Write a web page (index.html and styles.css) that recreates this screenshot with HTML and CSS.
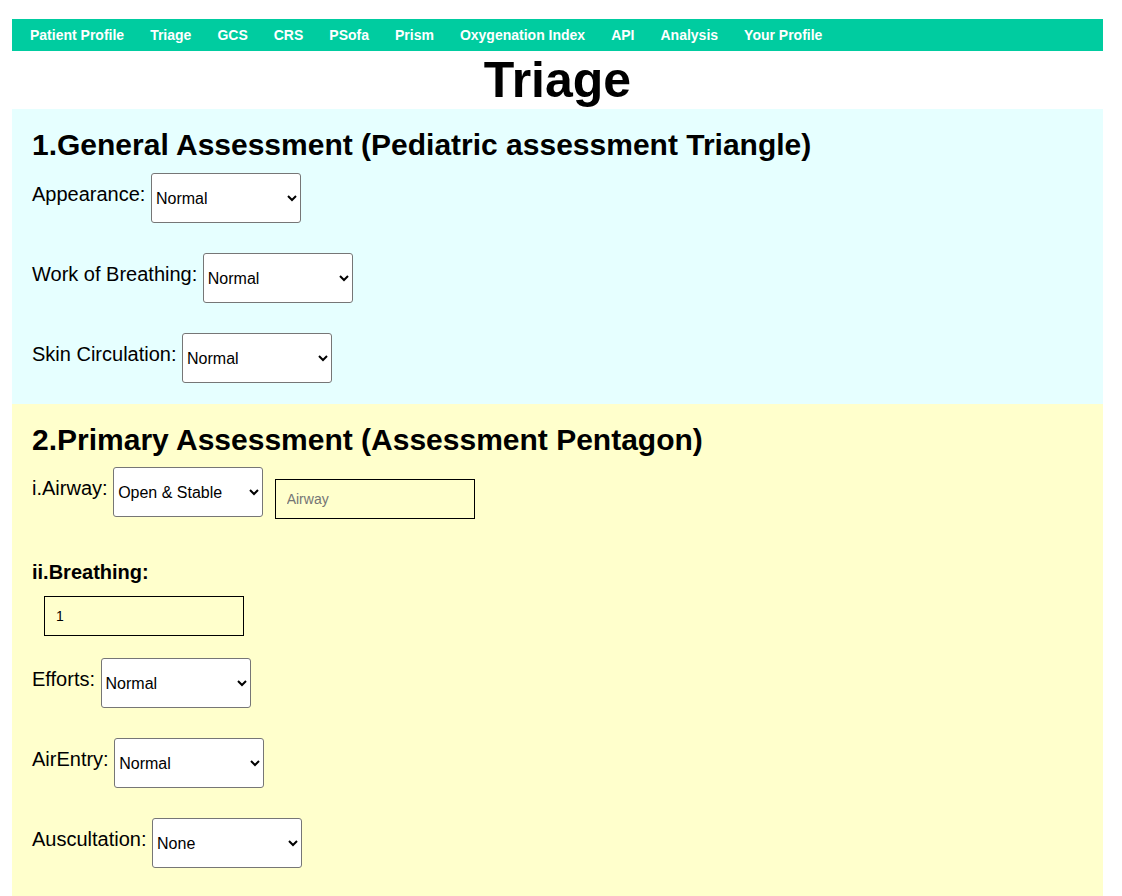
FILE: index.html
```html
<!DOCTYPE html>
<html>
<head>
<meta charset="utf-8">
<title>Triage</title>
<link rel="stylesheet" href="styles.css">
</head>
<body>
<div class="page">
  <nav class="topnav">
    <a class="nav-item" href="#">Patient Profile</a>
    <a class="nav-item" href="#">Triage</a>
    <a class="nav-item" href="#">GCS</a>
    <a class="nav-item" href="#">CRS</a>
    <a class="nav-item" href="#">PSofa</a>
    <a class="nav-item" href="#">Prism</a>
    <a class="nav-item" href="#">Oxygenation Index</a>
    <a class="nav-item" href="#">API</a>
    <a class="nav-item" href="#">Analysis</a>
    <a class="nav-item" href="#">Your Profile</a>
  </nav>
  <h1 class="title">Triage</h1>

  <section class="block general">
    <h2 class="block-title">1.General Assessment (Pediatric assessment Triangle)</h2>
    <div class="row">
      <label class="lbl">Appearance:</label>
      <select class="sel"><option>Normal</option><option>Abnormal</option></select>
    </div>
    <div class="row">
      <label class="lbl">Work of Breathing:</label>
      <select class="sel"><option>Normal</option><option>Abnormal</option></select>
    </div>
    <div class="row">
      <label class="lbl">Skin Circulation:</label>
      <select class="sel"><option>Normal</option><option>Abnormal</option></select>
    </div>
  </section>

  <section class="block primary">
    <h2 class="block-title primary-title">2.Primary Assessment (Assessment Pentagon)</h2>
    <div class="row airway-row">
      <label class="lbl">i.Airway:</label>
      <select class="sel"><option>Open &amp; Stable</option><option>Maintainable</option><option>Not Maintainable</option></select>
      <input class="txt airway-input" type="text" placeholder="Airway">
    </div>
    <h3 class="sub-title">ii.Breathing:</h3>
    <input class="txt breath-input" type="text" value="1">
    <div class="row">
      <label class="lbl">Efforts:</label>
      <select class="sel"><option>Normal</option><option>Increased</option></select>
    </div>
    <div class="row">
      <label class="lbl">AirEntry:</label>
      <select class="sel"><option>Normal</option><option>Decreased</option></select>
    </div>
    <div class="row">
      <label class="lbl">Auscultation:</label>
      <select class="sel"><option>None</option><option>Wheeze</option></select>
    </div>
  </section>
</div>
</body>
</html>
```

FILE: styles.css
```css
html, body {
  margin: 0;
  padding: 0;
  background: #ffffff;
}

body {
  font-family: "Liberation Sans", Arial, sans-serif;
  color: #000;
}

.page {
  width: 1091px;
  margin-left: 12px;
  padding-top: 19px;
}

.topnav {
  display: flex;
  align-items: center;
  height: 32px;
  background: #00cca0;
}

.nav-item {
  display: block;
  padding: 0 8px 0 18px;
  line-height: 32px;
  color: #ffffff;
  font-size: 14px;
  font-weight: bold;
  text-decoration: none;
}

.title {
  margin: 1px 0 0;
  text-align: center;
  font-size: 50px;
  line-height: 57px;
  font-weight: bold;
}

.block {
  padding: 19px 20px 21px;
}

.general {
  background: #e6ffff;
}

.primary {
  background: #ffffcc;
  padding-bottom: 40px;
}

.block-title {
  margin: 0 0 11px;
  font-size: 30px;
  line-height: 34px;
  font-weight: bold;
}

.primary-title {
  margin-bottom: 10px;
}

.row {
  display: flex;
  align-items: flex-start;
  gap: 5.56px;
  margin-bottom: 30px;
}

.row:last-child {
  margin-bottom: 0;
}

.lbl {
  padding-top: 10px;
  font-size: 20px;
  line-height: 23px;
}

.sel {
  width: 150px;
  height: 50px;
  margin: 0;
  font-family: "Liberation Sans", Arial, sans-serif;
  font-size: 16px;
  color: #000;
  background: #fff;
  border: 1px solid #767676;
  border-radius: 3px;
}

.txt {
  box-sizing: border-box;
  width: 200px;
  height: 40px;
  margin: 0;
  padding: 0 11px;
  font-family: "Liberation Sans", Arial, sans-serif;
  font-size: 14px;
  color: #000;
  background: transparent;
  border: 1px solid #000;
  border-radius: 0;
  outline: none;
}

.txt::placeholder {
  color: #757575;
}

.airway-row {
  margin-bottom: 0;
}

.airway-input {
  margin-top: 12px;
  margin-left: 6px;
}

.sub-title {
  margin: 42px 0 0;
  font-size: 20px;
  line-height: 23px;
  font-weight: bold;
}

.breath-input {
  display: block;
  margin: 12px 0 22px 12px;
}
```
